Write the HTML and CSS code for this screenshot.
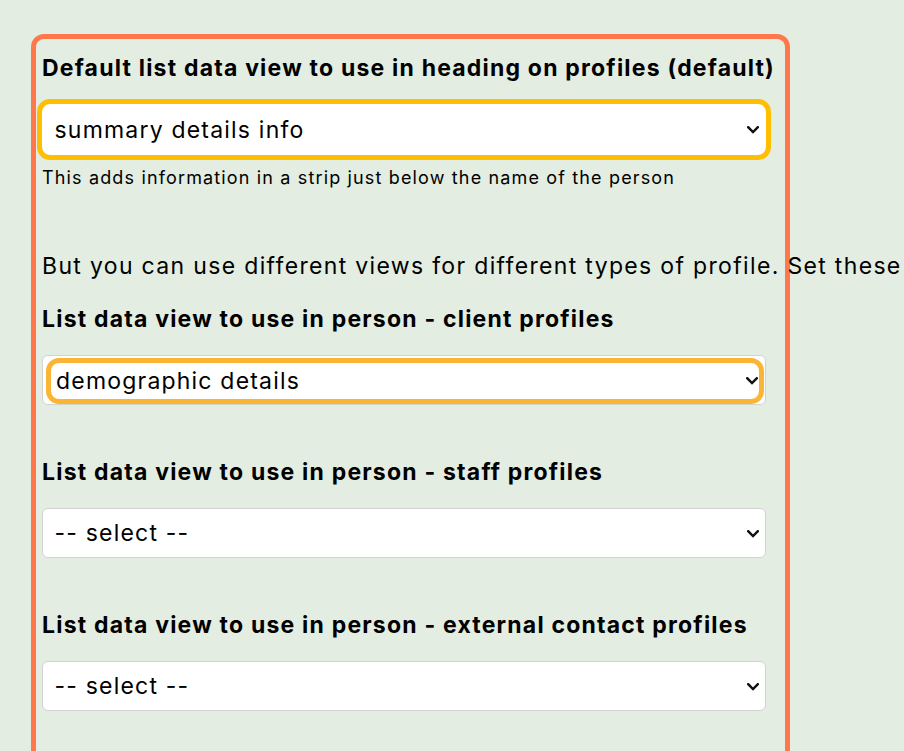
FILE: index.html
```html
<!DOCTYPE html>
<html lang="en">
<head>
<meta charset="utf-8">
<title>Profile list data views</title>
<link rel="stylesheet" href="styles.css">
</head>
<body>
<div class="panel">
  <label class="label" for="v-default">Default list data view to use in heading on profiles (default)</label>
  <div class="field">
    <select id="v-default" class="select focus-strong">
      <option>summary details info</option>
    </select>
    <svg class="chev" width="12" height="8" viewBox="0 0 12 8" aria-hidden="true"><path d="M1.2 1.2 L6 6 L10.8 1.2" fill="none" stroke="#111" stroke-width="2.4" stroke-linecap="square"/></svg>
  </div>
  <p class="help">This adds information in a strip just below the name of the person</p>

  <p class="intro">But you can use different views for different types of profile. Set these</p>

  <label class="label" for="v-client">List data view to use in person - client profiles</label>
  <div class="field boxed">
    <select id="v-client" class="select focus-inset">
      <option>demographic details</option>
    </select>
    <svg class="chev" width="12" height="8" viewBox="0 0 12 8" aria-hidden="true"><path d="M1.2 1.2 L6 6 L10.8 1.2" fill="none" stroke="#111" stroke-width="2.4" stroke-linecap="square"/></svg>
  </div>

  <label class="label spaced" for="v-staff">List data view to use in person - staff profiles</label>
  <div class="field">
    <select id="v-staff" class="select">
      <option>-- select --</option>
    </select>
    <svg class="chev" width="12" height="8" viewBox="0 0 12 8" aria-hidden="true"><path d="M1.2 1.2 L6 6 L10.8 1.2" fill="none" stroke="#111" stroke-width="2.4" stroke-linecap="square"/></svg>
  </div>

  <label class="label spaced" for="v-ext">List data view to use in person - external contact profiles</label>
  <div class="field">
    <select id="v-ext" class="select">
      <option>-- select --</option>
    </select>
    <svg class="chev" width="12" height="8" viewBox="0 0 12 8" aria-hidden="true"><path d="M1.2 1.2 L6 6 L10.8 1.2" fill="none" stroke="#111" stroke-width="2.4" stroke-linecap="square"/></svg>
  </div>
</div>
</body>
</html>
```

FILE: styles.css
```css
html, body {
  margin: 0;
  padding: 0;
  background: #e3ede1;
  overflow: hidden;
}
body {
  font-family: Inter, "Noto Sans", sans-serif;
  color: #000;
  padding: 34px 0 0 31px;
}
.panel {
  width: 724px;
  border: 5px solid #ff774a;
  border-bottom: none;
  border-radius: 13px 13px 0 0;
  padding: 14px 19px 60px 6px;
  display: flex;
  flex-direction: column;
  align-items: stretch;
}
.label {
  display: block;
  font-weight: 700;
  font-size: 23px;
  letter-spacing: 1.2px;
  line-height: 30px;
  margin: 0 0 21px;
  white-space: nowrap;
}
.label.spaced {
  margin-top: 52px;
}
.field {
  position: relative;
  width: 724px;
  box-sizing: border-box;
}
.select {
  -webkit-appearance: none;
  appearance: none;
  display: block;
  box-sizing: border-box;
  width: 100%;
  height: 50px;
  margin: 0;
  padding: 0 30px 0 11.5px;
  font-family: inherit;
  font-size: 23px;
  letter-spacing: 1.2px;
  color: #000;
  background-color: #fff;
  border: 1.5px solid #d2d2d2;
  border-radius: 6px;
}
.focus-strong {
  height: 51px;
  border-color: transparent;
  outline: 5px solid #ffbe00;
  border-radius: 8px;
}
.field.boxed {
  height: 50px;
  padding: 1.5px 1.5px 0.5px 3px;
  background: #fff;
  border: 1.5px solid #d2d2d2;
  border-radius: 6px;
}
.select.focus-inset {
  height: 46px;
  border: 5px solid #fbb534;
  border-radius: 13px;
  padding-left: 5px;
}
.chev {
  position: absolute;
  right: 7px;
  top: 50%;
  margin-top: -3.5px;
  pointer-events: none;
}
.help {
  margin: 11px 0 0;
  font-size: 18px;
  letter-spacing: 1.15px;
  line-height: 24px;
}
.intro {
  margin: 61px 0 23px;
  font-size: 23px;
  letter-spacing: 1.33px;
  line-height: 30px;
  white-space: nowrap;
}
```
